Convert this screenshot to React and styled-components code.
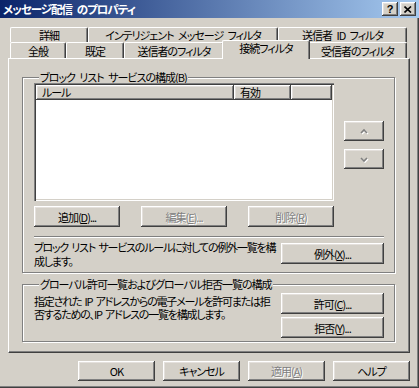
import React from "react";
import styled, { createGlobalStyle, css } from "styled-components";

const face = "#d4d0c8";

const Global = createGlobalStyle`
  html, body { margin: 0; padding: 0; background: ${face}; }
  body {
    font-family: "Noto Sans CJK JP", "Noto Sans", sans-serif;
    font-size: 11px;
    letter-spacing: -1px;
    word-spacing: 3px;
    font-feature-settings: "palt";
    color: #000;
  }
  * { box-sizing: border-box; }
`;

const bevel = css`
  background: ${face};
  box-shadow: inset -1px -1px #404040, inset 1px 1px #fff,
    inset -2px -2px #808080, inset 2px 2px #e4e0dc;
`;

const Window = styled.div`
  width: 419px;
  height: 388px;
  display: flex;
  flex-direction: column;
  background: ${face};
  box-shadow: inset -1px -1px #404040, inset -2px -2px #808080;
`;

const TitleBar = styled.div`
  height: 18px;
  display: flex;
  align-items: center;
  padding: 0 3px 0 3px;
  background: linear-gradient(to right, #0a246a, #a6caf0);
  color: #fff;
  font-weight: bold;
  font-size: 11.5px;
`;

const TitleButtons = styled.div`
  margin-left: auto;
  display: flex;
  gap: 2px;
`;

const TitleButton = styled.div`
  ${bevel};
  width: 16px;
  height: 14px;
  display: flex;
  align-items: center;
  justify-content: center;
  color: #000;
  font-family: "Liberation Sans", sans-serif;
  font-size: 11px;
  letter-spacing: 0;
  font-weight: bold;
`;

const Body = styled.div`
  padding: 9px 0 0 8px;
  display: flex;
  flex-direction: column;
`;

const Tabs = styled.div`
  margin-left: 2px;
  width: 397px;
`;

const TabRow = styled.div`
  display: flex;
  height: ${p => p.$h}px;
  align-items: flex-end;
`;

const Tab = styled.div`
  width: ${p => p.$w}px;
  height: 100%;
  display: flex;
  align-items: center;
  justify-content: center;
  background: ${face};
  border-top: 1px solid #fff;
  border-left: 1px solid #fff;
  border-right: 1px solid #404040;
  border-radius: 2px 2px 0 0;
  box-shadow: inset -1px 0 #808080;
  white-space: nowrap;
  ${p => p.$active && css`
    position: relative;
    z-index: 1;
    width: ${p.$w + 4}px;
    height: calc(100% + 3px);
    margin: 0 -2px -1px -2px;
    padding-bottom: 4px;
  `}
`;

const Panel = styled.div`
  width: 402px;
  height: 295px;
  padding: 12px 14px 0 13px;
  border-top: 1px solid #fff;
  border-left: 1px solid #fff;
  border-right: 1px solid #404040;
  border-bottom: 1px solid #404040;
  box-shadow: inset -1px -1px #808080;
`;

const Group = styled.fieldset`
  margin: ${p => p.$mt || 0}px 0 0 0;
  padding: 0 10px ${p => p.$pb || 0}px 11px;
  border: 1px solid #808080;
  box-shadow: 1px 1px 0 #fff, inset 1px 1px 0 #fff;
  min-width: 0;
`;

const Legend = styled.legend`
  margin-left: 5px;
  padding: 0 1px;
  line-height: 12px;
  height: 12px;
  background: ${face};
`;

const Row = styled.div`
  display: flex;
  justify-content: ${p => p.$justify || "flex-start"};
  align-items: flex-start;
  gap: ${p => p.$gap || 0}px;
  margin-top: ${p => p.$mt || 0}px;
  width: ${p => (p.$w ? p.$w + "px" : "auto")};
`;

const ListBox = styled.div`
  width: 300px;
  height: 118px;
  background: #fff;
  box-shadow: inset 1px 1px #808080, inset 2px 2px #404040,
    inset -1px -1px #fff, inset -2px -2px ${face};
  padding: 2px;
`;

const ListHeader = styled.div`
  display: flex;
  height: 15px;
`;

const HeaderCell = styled.div`
  ${bevel};
  width: ${p => (p.$w ? p.$w + "px" : "auto")};
  flex: ${p => (p.$w ? "none" : 1)};
  padding-left: 6px;
  line-height: 14px;
`;

const SideButtons = styled.div`
  display: flex;
  flex-direction: column;
  gap: 8px;
  padding-top: 38px;
`;

const Button = styled.div`
  ${bevel};
  width: ${p => p.$w}px;
  height: ${p => p.$h || 21}px;
  display: flex;
  align-items: center;
  justify-content: center;
  white-space: nowrap;
  margin-top: ${p => p.$mt || 0}px;
  ${p => p.$disabled && css`
    color: #808080;
    text-shadow: 1px 1px 0 #fff;
  `}
`;

const Separator = styled.div`
  margin-top: 9px;
  border-top: 1px solid #808080;
  border-bottom: 1px solid #fff;
`;

const Text = styled.div`
  line-height: ${p => p.$lh || 14}px;
  margin-top: ${p => p.$mt || 0}px;
  letter-spacing: -1.2px;
  word-spacing: 2px;
  white-space: nowrap;
`;

const ButtonColumn = styled.div`
  display: flex;
  flex-direction: column;
  gap: 3px;
  margin-top: ${p => p.$mt || 0}px;
`;

const Footer = styled.div`
  display: flex;
  justify-content: flex-end;
  gap: 8px;
  margin-top: 8px;
  padding-right: 9px;
`;

const Chevron = ({ up }) => (
  <svg width="11" height="7" viewBox="0 0 11 7">
    <polyline
      points={up ? "2,5 5,2 8,5" : "2,2 5,5 8,2"}
      transform="translate(1,1)"
      fill="none"
      stroke="#fff"
      strokeWidth="1.6"
    />
    <polyline
      points={up ? "2,5 5,2 8,5" : "2,2 5,5 8,2"}
      fill="none"
      stroke="#808080"
      strokeWidth="1.6"
    />
  </svg>
);

const CloseGlyph = () => (
  <svg width="8" height="7" viewBox="0 0 8 7">
    <path d="M0.5 0.5 L7 6.5 M7 0.5 L0.5 6.5" stroke="#000" strokeWidth="1.6" />
  </svg>
);

export default function App() {
  return (
    <>
      <Global />
      <Window>
        <TitleBar>
          <span>メッセージ配信 のプロパティ</span>
          <TitleButtons>
            <TitleButton>?</TitleButton>
            <TitleButton><CloseGlyph /></TitleButton>
          </TitleButtons>
        </TitleBar>

        <Body>
          <Tabs>
            <TabRow $h={15}>
              <Tab $w={78}>詳細</Tab>
              <Tab $w={190}>インテリジェント メッセージ フィルタ</Tab>
              <Tab $w={129}>送信者 ID フィルタ</Tab>
            </TabRow>
            <TabRow $h={16}>
              <Tab $w={56}>全般</Tab>
              <Tab $w={58}>既定</Tab>
              <Tab $w={100}>送信者のフィルタ</Tab>
              <Tab $w={84} $active>接続フィルタ</Tab>
              <Tab $w={99}>受信者のフィルタ</Tab>
            </TabRow>
          </Tabs>

          <Panel>
            <Group $pb={4}>
              <Legend>ブロック リスト サービスの構成(<u>B</u>)</Legend>
              <Row $gap={10}>
                <ListBox>
                  <ListHeader>
                    <HeaderCell $w={198}>ルール</HeaderCell>
                    <HeaderCell $w={57}>有効</HeaderCell>
                    <HeaderCell />
                  </ListHeader>
                </ListBox>
                <SideButtons>
                  <Button $w={40} $h={20}><Chevron up /></Button>
                  <Button $w={40} $h={20}><Chevron /></Button>
                </SideButtons>
              </Row>
              <Row $justify="space-between" $w={300} $mt={5}>
                <Button $w={86}>追加(<u>D</u>)...</Button>
                <Button $w={86} $disabled>編集(<u>E</u>)...</Button>
                <Button $w={86} $disabled>削除(<u>R</u>)</Button>
              </Row>
              <Separator />
              <Row $justify="space-between" $mt={2}>
                <Text>
                  ブロック リスト サービスのルールに対しての例外一覧を構<br />
                  成します。
                </Text>
                <Button $w={103} $mt={3}>例外(<u>X</u>)...</Button>
              </Row>
            </Group>

            <Group $mt={5} $pb={3}>
              <Legend>グローバル許可一覧およびグローバル拒否一覧の構成</Legend>
              <Row $justify="space-between">
                <Text $mt={5} $lh={13}>
                  指定された IP アドレスからの電子メールを許可または拒<br />
                  否するための、IP アドレスの一覧を構成します。
                </Text>
                <ButtonColumn $mt={3}>
                  <Button $w={103}>許可(<u>C</u>)...</Button>
                  <Button $w={103}>拒否(<u>Y</u>)...</Button>
                </ButtonColumn>
              </Row>
            </Group>
          </Panel>

          <Footer>
            <Button $w={77} $h={20}>OK</Button>
            <Button $w={77} $h={20}>キャンセル</Button>
            <Button $w={77} $h={20} $disabled>適用(<u>A</u>)</Button>
            <Button $w={77} $h={20}>ヘルプ</Button>
          </Footer>
        </Body>
      </Window>
    </>
  );
}
